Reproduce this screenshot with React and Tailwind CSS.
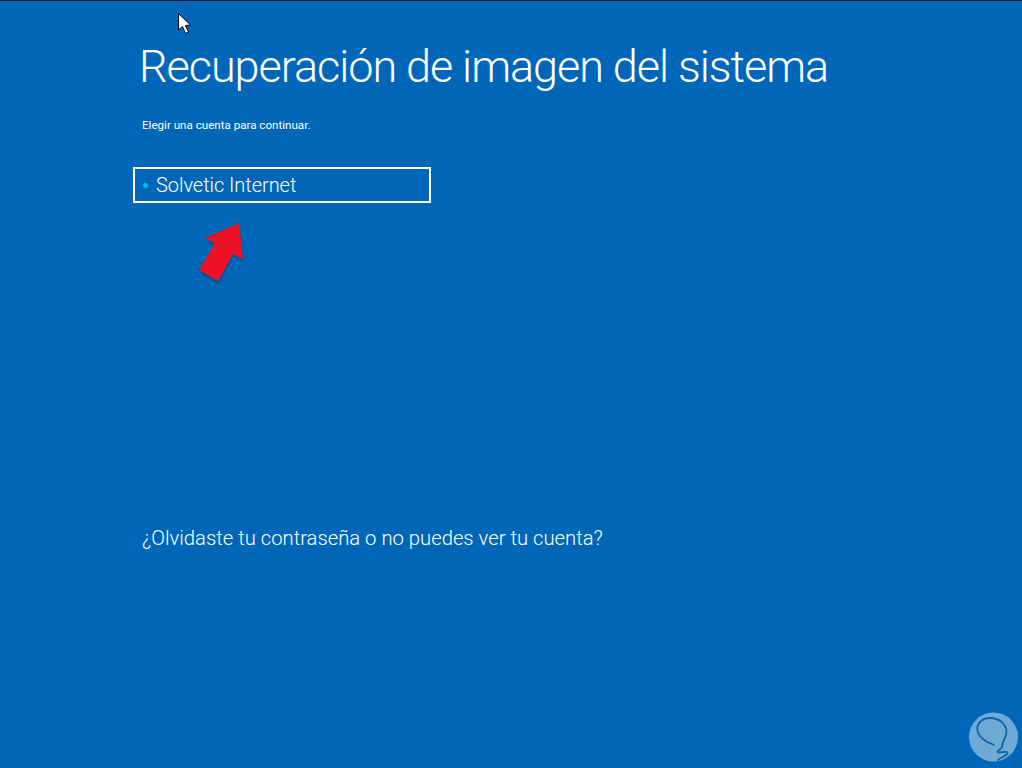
export default function App() {
  return (
    <div className="relative h-[768px] w-[1022px] overflow-hidden border-t border-t-[#0a1a2a] bg-[#0067b8] text-white font-['Roboto','Liberation_Sans',sans-serif]">
      <div className="flex flex-col items-start pl-[133px]">
        <h1 className="mt-[35px] ml-[6px] h-[62px] whitespace-nowrap text-[45px] leading-[62px] font-light tracking-[-1.05px]">Recuperación de imagen del sistema</h1>
        <p className="mt-[20px] ml-[9px] h-[14px] whitespace-nowrap text-[11.6px] leading-[14px]">Elegir una cuenta para continuar.</p>
        <div className="mt-[35px] flex h-[36px] w-[298px] items-center border-2 border-white pl-[8px]">
          <span className="h-[5px] w-[5px] rounded-full bg-[#00c0f0]" />
          <span className="ml-[8px] text-[20px] leading-[24px] font-light tracking-[-0.05px]">Solvetic Internet</span>
        </div>
        <p className="mt-[323px] ml-[9px] whitespace-nowrap text-[20.25px] leading-[24px] font-light">¿Olvidaste tu contraseña o no puedes ver tu cuenta?</p>
      </div>
      <svg className="absolute left-[170px] top-[3px]" width="30" height="35" viewBox="0 0 30 35">
        <path d="M8.5 9.5 L8.5 26 L12.5 22.5 L15.5 29.5 L18.5 28 L15.5 21.5 L20.5 21 Z" fill="white" stroke="black" strokeWidth="1" />
      </svg>
      <svg className="absolute left-[190px] top-[213px]" width="65" height="75" viewBox="0 0 65 75">
        <path d="M12 58 L28 32 L18 26 L51 11 L56 47 L46 40 L31 69 Z" fill="#0a3f75" opacity="0.45" transform="translate(-2 2)" />
        <path d="M9 56 L25 29 L15 24 L49 9 L53 45 L43 40 L28 67 Z" fill="#ed1226" />
      </svg>
      <svg className="absolute left-[965px] top-[708px]" width="56" height="56" viewBox="0 0 56 56">
        <circle cx="28.5" cy="28" r="24.5" fill="#6fa9d6" />
        <path d="M29 36 C22 33 15 30 12.5 22 C11 15 17 9 25 9 C34 9 41 15 41.5 22 C42 29 37 31 37 38 C37 40 32 41 32.5 43 C33 45 43 41 42.5 44 C42 47 36 48 33 51" fill="none" stroke="#0f62a8" strokeWidth="1.8" strokeLinecap="round" strokeLinejoin="round" />
      </svg>
    </div>
  );
}
